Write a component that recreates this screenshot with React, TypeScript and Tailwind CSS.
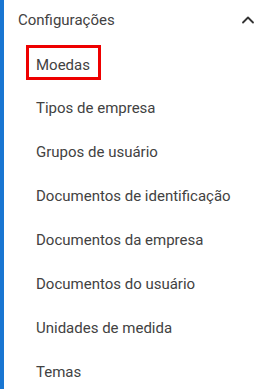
import { ChevronUp } from "lucide-react";

const items = [
  "Moedas",
  "Tipos de empresa",
  "Grupos de usuário",
  "Documentos de identificação",
  "Documentos da empresa",
  "Documentos do usuário",
  "Unidades de medida",
  "Temas",
];

export default function App() {
  return (
    <div className="h-[389px] w-[270px] overflow-hidden bg-white font-['Roboto',sans-serif] text-[15px] text-[#424242]">
      <div className="flex h-full border-l-4 border-[#1976d2]">
        <div className="flex-1">
          {/* Cabeçalho do grupo */}
          <div className="flex h-10 items-center justify-between pl-[14px] pr-[12px]">
            <span className="leading-5">Configurações</span>
            <ChevronUp className="h-5 w-5 text-[#333]" strokeWidth={2.2} />
          </div>

          <ul className="pt-[2px]">
            {items.map((item, i) => (
              <li key={item} className="flex h-11 items-center pl-[22px]">
                {i === 0 ? (
                  <span className="mb-[3px] border-[3px] border-[#ee0000] pb-[2px] pl-[7px] pr-[8px] pt-[7px] leading-5">
                    {item}
                  </span>
                ) : (
                  <span className="pl-[10px] leading-5">{item}</span>
                )}
              </li>
            ))}
          </ul>
        </div>
      </div>
    </div>
  );
}
